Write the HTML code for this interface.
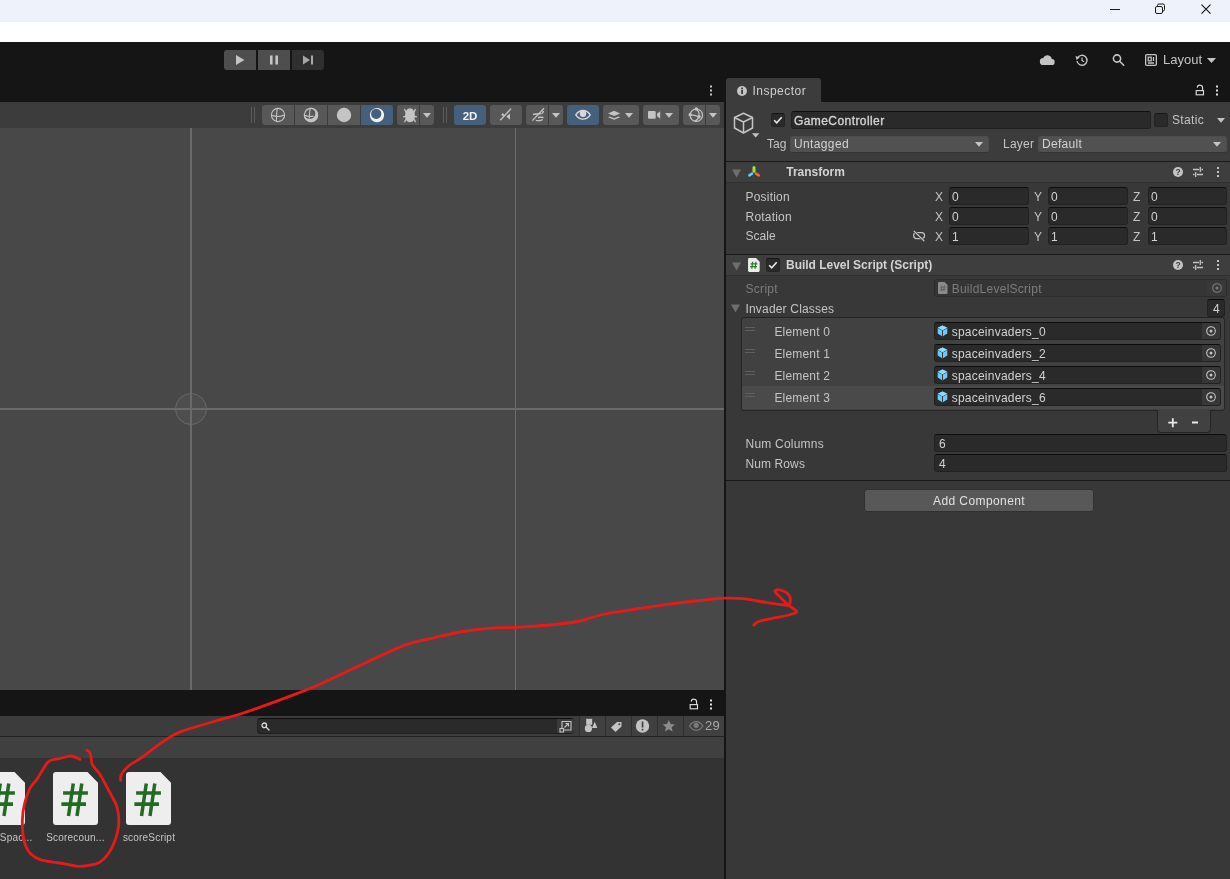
<!DOCTYPE html>
<html><head><meta charset="utf-8">
<style>
*{box-sizing:border-box;margin:0;padding:0}
html,body{width:1230px;height:879px;overflow:hidden;background:#151515;font-family:"Liberation Sans",sans-serif;font-size:12px;color:#c4c4c4}
.a{position:absolute}
.t{position:absolute;white-space:nowrap;line-height:14px;height:14px}
.f{position:absolute;background:#2a2a2a;border:1px solid #212121;border-top-color:#0d0d0d;border-radius:3px;height:18px}
.f span{position:absolute;left:2px;top:1px;line-height:14px;color:#d2d2d2;white-space:nowrap}
.btn{position:absolute;background:#585858;height:20px;top:105px}
.hl{position:absolute;left:726px;width:504px;height:1px;background:#1a1a1a}
.hd{position:absolute;left:726px;width:504px;height:21px;background:#3e3e3e;border-bottom:1px solid #303030}
.b{font-weight:bold;color:#d2d2d2}
svg{position:absolute;overflow:visible}
</style></head><body><div id="root" style="position:absolute;left:0;top:0;width:1230px;height:879px;will-change:transform">
<!-- window chrome -->
<div class="a" style="left:0;top:0;width:1230px;height:22px;background:#eef2fa"></div>
<div class="a" style="left:0;top:22px;width:1230px;height:20px;background:#fff"></div>
<svg style="left:1100px;top:0" width="130" height="21" viewBox="0 0 130 21" fill="none" stroke="#1a1a1a" stroke-width="1">
<path d="M10 9.5h10"/><rect x="55.5" y="6.500" width="7" height="7" rx="1.5"/><path d="M57.500 6.500v-1a1.500 1.500 0 0 1 1.500-1.500h4a1.500 1.500 0 0 1 1.500 1.500v4a1.500 1.500 0 0 1-1.500 1.500h-.5" />
<path d="M101.500 4.700l9 9M110.500 4.700l-9 9" stroke-width="1.200"/></svg>

<!-- main toolbar -->
<div class="a" style="left:0;top:42px;width:1230px;height:60px;background:#151515"></div>
<div class="a" style="left:224px;top:50px;width:32px;height:20px;background:#4e4e4e;border-radius:3px 0 0 3px"></div>
<div class="a" style="left:258px;top:50px;width:32px;height:20px;background:#4e4e4e"></div>
<div class="a" style="left:292px;top:50px;width:32px;height:20px;background:#2f2f2f;border-radius:0 3px 3px 0"></div>
<svg style="left:224px;top:50px" width="100" height="20" viewBox="0 0 100 20" fill="#c4c4c4">
<path d="M12 4.900l8.500 5.100l-8.500 5.100z"/><rect x="46" y="5.500" width="2.600" height="9"/><rect x="51.400" y="5.500" width="2.600" height="9"/>
<path d="M79 5.500l7 4.500l-7 4.500z" fill="#a8a8a8"/><rect x="87" y="5.500" width="2" height="9" fill="#a8a8a8"/></svg>

<!-- top-right icons -->
<svg style="left:1036px;top:50px" width="190" height="20" viewBox="0 0 190 20" fill="#c4c4c4">
<path d="M7.500 15a3.500 3.500 0 0 1-.3-7 4.500 4.500 0 0 1 8.600 1 3 3 0 0 1-.3 6z"/>
<g fill="none" stroke="#c4c4c4" stroke-width="1.400"><path d="M41.500 8a5 5 0 1 1-.5 3"/><path d="M46 7.500v3l2 1.300" stroke-width="1.200"/></g><path d="M39.500 6l1 4 3.300-2.600z"/>
<g fill="none" stroke="#c4c4c4" stroke-width="1.600"><circle cx="81" cy="8.500" r="3.600"/><path d="M83.700 11.200l4 4" stroke-linecap="round"/></g>
<g fill="none" stroke="#c4c4c4" stroke-width="1.300"><rect x="109.650" y="4.650" width="10.700" height="10.700" rx="1"/><rect x="112.200" y="7.200" width="3" height="3.600"/><path d="M117.500 7v4M112 13h6"/></g>
<path d="M171 8h9l-4.500 5z"/></svg>
<div class="t" style="left:1163px;top:53px;font-size:13px;color:#c4c4c4">Layout</div>

<!-- scene tab strip kebab -->
<svg style="left:709px;top:84px" width="4" height="14" viewBox="0 0 4 14" fill="#c4c4c4"><rect x="1" y="1.500" width="2" height="2"/><rect x="1" y="5.500" width="2" height="2"/><rect x="1" y="9.500" width="2" height="2"/></svg>

<!-- scene toolbar -->
<div class="a" style="left:0;top:102px;width:724px;height:26px;background:#3c3c3c"></div>
<div class="a" style="left:251px;top:107px;width:1px;height:16px;background:#5c5c5c"></div><div class="a" style="left:254px;top:107px;width:1px;height:16px;background:#5c5c5c"></div>
<div class="a" style="left:443px;top:107px;width:1px;height:16px;background:#5c5c5c"></div><div class="a" style="left:446px;top:107px;width:1px;height:16px;background:#5c5c5c"></div>
<div class="btn" style="left:262px;width:32px;border-radius:3px 0 0 3px"></div>
<div class="btn" style="left:295px;width:32px"></div>
<div class="btn" style="left:328px;width:32px"></div>
<div class="btn" style="left:361px;width:32px;background:#46607c;border-radius:0 3px 3px 0"></div>
<div class="btn" style="left:397px;width:22px;border-radius:3px 0 0 3px"></div>
<div class="btn" style="left:420px;width:14px;border-radius:0 3px 3px 0"></div>
<div class="btn" style="left:454px;width:32px;background:#46607c;border-radius:3px"></div>
<div class="btn" style="left:490px;width:32px;border-radius:3px"></div>
<div class="btn" style="left:526px;width:22px;border-radius:3px 0 0 3px"></div>
<div class="btn" style="left:549px;width:14px;border-radius:0 3px 3px 0"></div>
<div class="btn" style="left:567px;width:32px;background:#46607c;border-radius:3px"></div>
<div class="btn" style="left:603px;width:36px;border-radius:3px"></div>
<div class="btn" style="left:643px;width:36px;border-radius:3px"></div>
<div class="btn" style="left:683px;width:22px;border-radius:3px 0 0 3px"></div>
<div class="btn" style="left:706px;width:14px;border-radius:0 3px 3px 0"></div>
<svg style="left:0;top:102px" width="724" height="26" viewBox="0 102 724 26" fill="#c4c4c4">
<!-- shading mode icons -->
<g fill="none" stroke="#c4c4c4" stroke-width="1.100"><circle cx="278" cy="115" r="6.600"/><path d="M277.200 108.500c-.6 4-.8 9-.8 13M271.500 115.300c4 1.500 9 1.500 13 -.3"/>
<circle cx="311" cy="115" r="6.600"/><path d="M310.200 108.500c-.6 3-.8 7-.8 10M304.500 115.300c3 1.200 6 1.400 9 .8"/></g>
<path fill-rule="evenodd" d="M311 107.800a7.200 7.200 0 1 0 .01 0zM309.800 107.900a5.500 5.500 0 1 0 .01 0z" />
<circle cx="344" cy="115" r="7.200"/>
<path fill-rule="evenodd" fill="#f0f0f0" d="M377 108a7.100 7.100 0 1 0 .01 0zM376.200 108.800a5.100 5.100 0 1 0 .01 0z"/>
<!-- bug -->
<path d="M410 108.200c-2.800 0-4.900 2.800-4.900 7.800c0 4 2 6.200 4.900 6.200s4.900-2.200 4.900-6.200c0-5-2.100-7.800-4.900-7.800z"/>
<g stroke="#c4c4c4" stroke-width="1.300" fill="none" stroke-linecap="round"><path d="M406 112.200l-1.300-2.800M414 112.200l1.300-2.800M405.300 116.300l-1.700.6M414.700 116.300l1.700.6M405.700 119.800l-1 1.800M414.300 119.800l1 1.800"/></g>
<path d="M423 113h8l-4 4.700z"/>
<!-- 2D -->
<text x="470" y="119.500" text-anchor="middle" font-family="Liberation Sans" font-weight="bold" font-size="11.500" fill="#f0f0f0">2D</text>
<!-- audio off -->
<path d="M506.300 116.600l3.700-3v6.200z"/><path d="M502.300 113l2.200 1.800-1.300 1.500-1.800-1.200z"/><path d="M500.300 120.200l10.800-11.600" stroke="#c4c4c4" stroke-width="1.300" fill="none"/>
<!-- fx off -->
<g stroke="#c4c4c4" stroke-width="1.300" fill="none"><path d="M532.400 120.600l11.600-12.400"/><path d="M533 114.500c3-.8 5.500-1 8.500-.8M538 117.500c2-.4 3.500-.4 5.500 0M543.500 111l-1.200 2.500" stroke-width="1.500"/></g>
<path d="M535.500 119.500c2 .8 4.500 .8 7.500-.5l-.5 1.500c-2.500 1-5 1-6.500 .5z"/>
<path d="M552 113h8l-4 4.700z"/>
<!-- eye -->
<path d="M575.800 114.800c2-3 4.500-4.300 7.200-4.300s5.200 1.300 7.200 4.300c-2 3-4.500 4.300-7.200 4.300s-5.200-1.300-7.200-4.300z" fill="none" stroke="#d8d8d8" stroke-width="1.400"/><circle cx="583" cy="113.700" r="3.200" fill="#d8d8d8"/>
<!-- layers -->
<path d="M608 113.400l6.100-2.600 6.100 2.600-6.100 2.600z"/><path d="M608 117.200l1.800-.8 4.300 1.800 4.300-1.800 1.800 .8-6.100 2.600z"/>
<path d="M625 113h8l-4 4.700z"/>
<!-- camera -->
<rect x="648" y="111" width="7.700" height="7.800" rx="1"/><path d="M657 113.800l3.200-2.600v7.500l-3.200-2.600z"/>
<path d="M665 113h8l-4 4.700z"/>
<!-- gizmo sphere -->
<g fill="none" stroke="#c4c4c4" stroke-width="1.200"><circle cx="696.300" cy="115.200" r="6.200"/><path d="M696.300 109c2.500 2 3.200 5 2.700 7.700c-1 2.500-2.500 4-4.500 4.500M690 114.700c3 .3 6 1 9 2"/></g><circle cx="696.300" cy="109" r="1.700"/><circle cx="690.200" cy="114.700" r="1.700"/><circle cx="699" cy="116.700" r="1.700"/>
<path d="M709 113h8l-4 4.700z"/>
</svg>


<!-- scene view -->
<div class="a" style="left:0;top:128px;width:724px;height:562px;background:#484848"></div>
<div class="a" style="left:175px;top:393px;width:32px;height:32px;border-radius:50%;border:1px solid #686868;background:#4e4e4e"></div>
<div class="a" style="left:190px;top:128px;width:2px;height:562px;background:#6a6a6a"></div>
<div class="a" style="left:515px;top:128px;width:1px;height:562px;background:#6c6c6c"></div>
<div class="a" style="left:0;top:408px;width:724px;height:2px;background:#6a6a6a"></div>

<!-- project panel -->
<div class="a" style="left:0;top:690px;width:724px;height:26px;background:#151515"></div>
<div class="a" style="left:0;top:716px;width:724px;height:21px;background:#3c3c3c;border-bottom:1px solid #232323"></div>
<div class="a" style="left:0;top:737px;width:724px;height:21px;background:#404040"></div>
<div class="a" style="left:0;top:758px;width:724px;height:121px;background:#333"></div>
<!--PROJ-->
<svg style="left:688px;top:698px" width="30" height="14" viewBox="0 0 30 14" fill="none" stroke="#e0e0e0" stroke-width="1.100"><rect x="2.200" y="6.600" width="7.300" height="4.200"/><path d="M3.200 3.600a2.600 2.600 0 0 1 5.400 .6V6.500"/><g fill="#e0e0e0" stroke="none"><rect x="22" y="1.500" width="2" height="2"/><rect x="22" y="5.500" width="2" height="2"/><rect x="22" y="9.500" width="2" height="2"/></g></svg>
<div class="a" style="left:257px;top:718px;width:317px;height:16px;background:#2a2a2a;border:1px solid #212121;border-top-color:#0d0d0d;border-radius:4px"></div>
<div class="a" style="left:557px;top:719px;width:17px;height:14px;background:#3a3a3a;border-radius:0 3px 3px 0"></div>
<svg style="left:261px;top:722px" width="9" height="9" viewBox="0 0 9 9" fill="none" stroke="#d8d8d8" stroke-width="1.300"><circle cx="3.300" cy="3.300" r="2.300"/><path d="M5 5l3 3" stroke-linecap="round"/></svg>
<svg style="left:559px;top:720px" width="14" height="13" viewBox="0 0 14 13" fill="none" stroke="#c4c4c4" stroke-width="1.100"><path d="M3 8.500V1.500h9v8.500H5"/><rect x="1" y="8.500" width="3.500" height="3.500"/><path d="M5.500 7.500l4-4M6.500 3.500h3v3"/></svg>
<div class="a" style="left:579px;top:716px;width:26px;height:20px;background:#404040;border-left:1px solid #2f2f2f"></div>
<div class="a" style="left:605px;top:716px;width:26px;height:20px;background:#404040;border-left:1px solid #2f2f2f"></div>
<div class="a" style="left:631px;top:716px;width:26px;height:20px;background:#404040;border-left:1px solid #2f2f2f"></div>
<div class="a" style="left:657px;top:716px;width:26px;height:20px;background:#404040;border-left:1px solid #2f2f2f"></div>
<div class="a" style="left:683px;top:716px;width:41px;height:20px;background:#404040;border-left:1px solid #2f2f2f"></div>
<svg style="left:579px;top:716px" width="145" height="20" viewBox="579 716 145 20" fill="#c4c4c4"><rect x="586.200" y="718.800" width="6" height="6"/><circle cx="588.400" cy="728.400" r="3.600"/><path d="M592 728l2.700-6.200 2.700 6.200z"/><path d="M611 727.500l6-5.500h4.500v4.500l-6 5.500z"/><circle cx="619.300" cy="724.200" r="1" fill="#404040"/><circle cx="642.500" cy="726" r="6.700"/><rect x="641.700" y="721.500" width="1.700" height="6" fill="#404040"/><rect x="641.700" y="728.800" width="1.700" height="1.700" fill="#404040"/><path d="M668.800 720l1.800 4 4.300 .4-3.300 2.900 1 4.200-3.800-2.300-3.800 2.300 1-4.200-3.300-2.900 4.300-.4z" fill="#8c8c8c"/><path d="M689.500 726c2-3 4.300-4.300 6.700-4.300s4.700 1.300 6.700 4.300c-2 3-4.300 4.300-6.700 4.300s-4.700-1.300-6.700-4.300z" fill="none" stroke="#7a7a7a" stroke-width="1.200"/><circle cx="696.200" cy="725.300" r="2.600" fill="#7a7a7a"/></svg>
<div class="t" style="left:705px;top:719px;font-size:13px;color:#a8a8a8;letter-spacing:0.2px">29</div>
<svg style="left:-20px;top:772px" width="45" height="53" viewBox="0 0 45 53"><path d="M3 0h31.500l10.500 10.800v39.200a3 3 0 0 1-3 3h-39a3 3 0 0 1-3-3v-47a3 3 0 0 1 3-3z" fill="#eeeeee"/><g stroke="#236b23" fill="none"><path d="M20.300 11.500l-4.800 32.500M28.800 11.500l-4.800 32.500" stroke-width="3.500"/><path d="M10.100 21h24.800M8.400 32.200h24.600" stroke-width="3.700"/></g></svg>
<svg style="left:53px;top:772px" width="45" height="53" viewBox="0 0 45 53"><path d="M3 0h31.500l10.500 10.800v39.200a3 3 0 0 1-3 3h-39a3 3 0 0 1-3-3v-47a3 3 0 0 1 3-3z" fill="#eeeeee"/><g stroke="#236b23" fill="none"><path d="M20.300 11.500l-4.800 32.500M28.800 11.500l-4.800 32.500" stroke-width="3.500"/><path d="M10.100 21h24.800M8.400 32.200h24.600" stroke-width="3.700"/></g></svg>
<svg style="left:126px;top:772px" width="45" height="53" viewBox="0 0 45 53"><path d="M3 0h31.500l10.500 10.800v39.200a3 3 0 0 1-3 3h-39a3 3 0 0 1-3-3v-47a3 3 0 0 1 3-3z" fill="#eeeeee"/><g stroke="#236b23" fill="none"><path d="M20.300 11.500l-4.800 32.500M28.800 11.500l-4.800 32.500" stroke-width="3.500"/><path d="M10.100 21h24.800M8.400 32.200h24.600" stroke-width="3.700"/></g></svg>
<div class="t" style="left:-7px;top:831px;font-size:10px;line-height:13px;height:13px;color:#c4c4c4;letter-spacing:0.2px">VSpac...</div>
<div class="t" style="left:25.5px;width:100px;text-align:center;top:831px;font-size:10px;line-height:13px;height:13px;color:#c4c4c4;letter-spacing:0.2px">Scorecoun...</div>
<div class="t" style="left:99px;width:100px;text-align:center;top:831px;font-size:10px;line-height:13px;height:13px;color:#c4c4c4;letter-spacing:0.2px">scoreScript</div>
<!--/PROJ-->

<!-- inspector -->
<div class="a" style="left:726px;top:78px;width:95px;height:24px;background:#3c3c3c;border-radius:3px 3px 0 0"></div>
<div class="a" style="left:726px;top:102px;width:504px;height:777px;background:#383838"></div>
<div class="a" style="left:726px;top:102px;width:504px;height:59px;background:#3c3c3c"></div>
<!--INSP-->
<svg style="left:736px;top:85px" width="12" height="12" viewBox="0 0 12 12"><circle cx="6" cy="6" r="5" fill="#c4c4c4"/><rect x="5.200" y="5" width="1.800" height="4" fill="#3c3c3c"/><rect x="5.200" y="2.600" width="1.800" height="1.700" fill="#3c3c3c"/></svg>
<div class="t " style="left:752.4px;top:84px;letter-spacing:0.5px;color:#cfcfcf">Inspector</div>
<svg style="left:1194px;top:84px" width="30" height="14" viewBox="0 0 30 14" fill="none" stroke="#e0e0e0" stroke-width="1.100"><rect x="2.200" y="6.600" width="7.300" height="4.200"/><path d="M3.200 3.600a2.600 2.600 0 0 1 5.400 .6V6.500"/><g fill="#e0e0e0" stroke="none"><rect x="22" y="1.500" width="2" height="2"/><rect x="22" y="5.500" width="2" height="2"/><rect x="22" y="9.500" width="2" height="2"/></g></svg>
<svg style="left:732px;top:111px" width="30" height="28" viewBox="0 0 30 28" fill="none" stroke="#c4c4c4" stroke-width="1.500" stroke-linejoin="round"><path d="M11.500 2.300l9 4.200v10.500l-9 5-9-5V6.500z"/><path d="M2.500 6.500l9 4.500 9-4.500M11.500 11v11"/><path d="M20 22.300h7.400l-3.700 4.200z" fill="#c4c4c4" stroke="none"/></svg>
<div class="a" style="left:771px;top:113px;width:14px;height:14px;background:#2a2a2a;border:1px solid #242424;border-top-color:#161616;border-radius:2.500px"></div>
<svg style="left:771px;top:113px" width="14" height="14" viewBox="0 0 14 14" fill="none" stroke="#e8e8e8" stroke-width="1.600"><path d="M3.200 7.300l2.500 2.500 5-5.500"/></svg>
<div class="f" style="left:791px;top:111px;width:360px;height:18px;-webkit-text-stroke:0.35px #d2d2d2"><span style="letter-spacing:0.42px;top:2px;left:2px">GameController</span></div>
<div class="a" style="left:1154px;top:113px;width:14px;height:14px;background:#2a2a2a;border:1px solid #242424;border-top-color:#161616;border-radius:2.500px"></div>
<div class="t " style="left:1172px;top:113px;letter-spacing:0.33px;">Static</div>
<svg style="left:1216px;top:117px" width="10" height="7" viewBox="0 0 10 7"><path d="M1 1h8l-4 4.700z" fill="#c4c4c4"/></svg>
<div class="t " style="left:767px;top:137px;letter-spacing:0px;">Tag</div>
<div class="a" style="left:790px;top:136px;width:199px;height:17px;background:#515151;border:1px solid #4d4d4d;border-bottom-color:#333;border-radius:3px"></div>
<div class="t " style="left:794px;top:137px;letter-spacing:0.37px;color:#d2d2d2">Untagged</div>
<svg style="left:974px;top:141px" width="10" height="7" viewBox="0 0 10 7"><path d="M1 1h8l-4 4.700z" fill="#c4c4c4"/></svg>
<div class="t " style="left:1003px;top:137px;letter-spacing:0.25px;">Layer</div>
<div class="a" style="left:1038px;top:136px;width:189px;height:17px;background:#515151;border:1px solid #4d4d4d;border-bottom-color:#333;border-radius:3px"></div>
<div class="t " style="left:1042px;top:137px;letter-spacing:0.3px;color:#d2d2d2">Default</div>
<svg style="left:1212px;top:141px" width="10" height="7" viewBox="0 0 10 7"><path d="M1 1h8l-4 4.700z" fill="#c4c4c4"/></svg>
<div class="hl" style="top:161px"></div>
<div class="hd" style="top:162px"></div>
<svg style="left:731px;top:168.5px" width="11" height="9" viewBox="0 0 11 9"><path d="M1 .5h9l-4.500 8z" fill="#6e6e6e"/></svg>
<svg style="left:1172px;top:166px" width="54" height="12" viewBox="0 0 54 12"><circle cx="6" cy="6" r="5" fill="#c4c4c4"/><text x="6" y="9.200" font-size="8.500" font-weight="bold" text-anchor="middle" fill="#3e3e3e" font-family="Liberation Sans">?</text><g stroke="#c4c4c4" stroke-width="1.300" fill="none"><path d="M21 3.500h6M29.500 3.500h1.500M21 8.500h1.500M25 8.500h6M28.300 1v5M23.700 6v5"/></g><g fill="#c4c4c4"><rect x="45" y="1" width="2" height="2"/><rect x="45" y="5" width="2" height="2"/><rect x="45" y="9" width="2" height="2"/></g></svg>
<svg style="left:747px;top:165px" width="14" height="14" viewBox="0 0 14 14" fill="none" stroke-linecap="round"><path d="M7 2.600v3.600" stroke="#a4e03c" stroke-width="3"/><path d="M5 8.700l-2.600 1.600" stroke="#62ccff" stroke-width="2.600"/><path d="M9.100 8.700l2.600 1.600" stroke="#f86a3c" stroke-width="2.600"/></svg>
<div class="t b" style="left:786.3px;top:165px;letter-spacing:-0.02px;">Transform</div>
<div class="t " style="left:745.5px;top:190px;letter-spacing:0.2px;">Position</div>
<div class="t " style="left:935px;top:190px;letter-spacing:0px;">X</div>
<div class="f" style="left:949px;top:187px;width:80px;height:18px;"><span style="letter-spacing:0.2px;top:2px;left:2px">0</span></div>
<div class="t " style="left:1034px;top:190px;letter-spacing:0px;">Y</div>
<div class="f" style="left:1048px;top:187px;width:80px;height:18px;"><span style="letter-spacing:0.2px;top:2px;left:2px">0</span></div>
<div class="t " style="left:1133px;top:190px;letter-spacing:0px;">Z</div>
<div class="f" style="left:1148px;top:187px;width:79px;height:18px;"><span style="letter-spacing:0.2px;top:2px;left:2px">0</span></div>
<div class="t " style="left:745.5px;top:210px;letter-spacing:0.21px;">Rotation</div>
<div class="t " style="left:935px;top:210px;letter-spacing:0px;">X</div>
<div class="f" style="left:949px;top:207px;width:80px;height:18px;"><span style="letter-spacing:0.2px;top:2px;left:2px">0</span></div>
<div class="t " style="left:1034px;top:210px;letter-spacing:0px;">Y</div>
<div class="f" style="left:1048px;top:207px;width:80px;height:18px;"><span style="letter-spacing:0.2px;top:2px;left:2px">0</span></div>
<div class="t " style="left:1133px;top:210px;letter-spacing:0px;">Z</div>
<div class="f" style="left:1148px;top:207px;width:79px;height:18px;"><span style="letter-spacing:0.2px;top:2px;left:2px">0</span></div>
<div class="t " style="left:745.5px;top:229px;letter-spacing:0.05px;">Scale</div>
<div class="t " style="left:935px;top:230px;letter-spacing:0px;">X</div>
<div class="f" style="left:949px;top:227px;width:80px;height:18px;"><span style="letter-spacing:0.2px;top:2px;left:2px">1</span></div>
<div class="t " style="left:1034px;top:230px;letter-spacing:0px;">Y</div>
<div class="f" style="left:1048px;top:227px;width:80px;height:18px;"><span style="letter-spacing:0.2px;top:2px;left:2px">1</span></div>
<div class="t " style="left:1133px;top:230px;letter-spacing:0px;">Z</div>
<div class="f" style="left:1148px;top:227px;width:79px;height:18px;"><span style="letter-spacing:0.2px;top:2px;left:2px">1</span></div>
<svg style="left:905px;top:224px" width="30" height="24" viewBox="905 224 30 24" fill="none" stroke="#c4c4c4" stroke-width="1.200" stroke-linecap="round"><rect x="913.600" y="232.600" width="11" height="6" rx="3"/><path d="M914.200 231.200l9.700 9.600" stroke="#383838" stroke-width="2.400"/><path d="M914.200 231.200l9.700 9.600"/></svg>
<div class="hl" style="top:254px"></div>
<div class="hd" style="top:255px"></div>
<svg style="left:731px;top:261.5px" width="11" height="9" viewBox="0 0 11 9"><path d="M1 .5h9l-4.500 8z" fill="#6e6e6e"/></svg>
<svg style="left:1172px;top:259px" width="54" height="12" viewBox="0 0 54 12"><circle cx="6" cy="6" r="5" fill="#c4c4c4"/><text x="6" y="9.200" font-size="8.500" font-weight="bold" text-anchor="middle" fill="#3e3e3e" font-family="Liberation Sans">?</text><g stroke="#c4c4c4" stroke-width="1.300" fill="none"><path d="M21 3.500h6M29.500 3.500h1.500M21 8.500h1.500M25 8.500h6M28.300 1v5M23.700 6v5"/></g><g fill="#c4c4c4"><rect x="45" y="1" width="2" height="2"/><rect x="45" y="5" width="2" height="2"/><rect x="45" y="9" width="2" height="2"/></g></svg>
<svg style="left:748px;top:258px" width="12.200" height="14" viewBox="0 0 13 15"><path d="M1.500 0h7l4 4v9.500a1.500 1.500 0 0 1-1.500 1.500h-9.500a1.500 1.500 0 0 1-1.500-1.500v-12a1.500 1.500 0 0 1 1.500-1.500z" fill="#ececec"/><g stroke="#2a7a2a" stroke-width="1.300" fill="none"><path d="M5 4l-1 7.500M8.500 4l-1 7.500M2.700 6.300h7.300M2.300 9.300h7.300"/></g></svg>
<div class="a" style="left:766px;top:258px;width:14px;height:14px;background:#2a2a2a;border:1px solid #242424;border-top-color:#161616;border-radius:2.500px"></div>
<svg style="left:766px;top:258px" width="14" height="14" viewBox="0 0 14 14" fill="none" stroke="#e8e8e8" stroke-width="1.600"><path d="M3.200 7.300l2.500 2.500 5-5.500"/></svg>
<div class="t b" style="left:786px;top:258px;letter-spacing:-0.02px;">Build Level Script (Script)</div>
<div class="t " style="left:745.5px;top:282px;letter-spacing:0.3px;color:#7c7c7c">Script</div>
<div class="a" style="left:934px;top:279px;width:293px;height:18px;background:#353535;border:1px solid #2c2c2c;border-radius:3px"></div>
<div class="a" style="left:1207px;top:280px;width:19px;height:16px;background:#393939;border-radius:0 2px 2px 0"></div>
<svg style="left:938px;top:282px" width="10" height="12" viewBox="0 0 10 12"><path d="M1 0h5.500l3 3v8a1 1 0 0 1-1 1h-7.500a1 1 0 0 1-1-1v-10a1 1 0 0 1 1-1z" fill="#8a8a8a"/><g stroke="#4f6f4f" stroke-width="1" fill="none"><path d="M4 3.500l-.7 5.500M6.500 3.500l-.7 5.500M2.200 5.200h5.300M2 7.500h5.300"/></g></svg>
<div class="t " style="left:951.7px;top:282px;letter-spacing:0.25px;color:#7c7c7c">BuildLevelScript</div>
<svg style="left:1211px;top:282px" width="12" height="12" viewBox="0 0 12 12"><circle cx="6" cy="6" r="4.300" fill="none" stroke="#7c7c7c" stroke-width="1.100"/><circle cx="6" cy="6" r="1.500" fill="#7c7c7c"/></svg>
<svg style="left:730px;top:304px" width="11" height="9" viewBox="0 0 11 9"><path d="M1 .5h9l-4.500 8z" fill="#6e6e6e"/></svg>
<div class="t " style="left:745.5px;top:301.5px;letter-spacing:0.18px;">Invader Classes</div>
<div class="f" style="left:1207px;top:299px;width:18px;height:18px;"><span style="letter-spacing:0px;top:2px;left:2px"><i style="font-style:normal;margin-left:3px">4</i></span></div>
<div class="a" style="left:741px;top:317px;width:484px;height:94px;background:#414141;border:1px solid #242424;border-radius:3px"></div>
<div class="a" style="left:742px;top:386px;width:482px;height:23px;background:#4a4a4a"></div>
<div class="a" style="left:745px;top:327px;width:10px;height:1px;background:#5e5e5e"></div><div class="a" style="left:745px;top:330px;width:10px;height:1px;background:#5e5e5e"></div>
<div class="t " style="left:774.4px;top:325px;letter-spacing:0.19px;">Element 0</div>
<div class="f" style="left:934px;top:322px;width:287px;height:18px;"><span style="letter-spacing:0.2px;top:1px;left:2px"></span></div>
<div class="a" style="left:1202px;top:323px;width:18px;height:16px;background:#373737;border-radius:0 2px 2px 0"></div>
<svg style="left:937px;top:325px" width="11" height="12" viewBox="0 0 11 12"><path d="M5.500 .5l4.800 2.300v5.700l-4.800 3-4.800-3V2.800z" fill="#6ecbf5"/><path d="M.7 2.800l4.800 2.500 4.800-2.500M5.500 5.300v6.200" stroke="#2a2a2a" stroke-width=".9" fill="none"/><path d="M5.500 .5l4.800 2.300-4.800 2.500-4.800-2.500z" fill="#8fdcff"/></svg>
<div class="t " style="left:951.7px;top:325px;letter-spacing:0.23px;color:#d2d2d2">spaceinvaders_0</div>
<svg style="left:1205px;top:325px" width="12" height="12" viewBox="0 0 12 12"><circle cx="6" cy="6" r="4.300" fill="none" stroke="#c4c4c4" stroke-width="1.100"/><circle cx="6" cy="6" r="1.500" fill="#c4c4c4"/></svg>
<div class="a" style="left:745px;top:349px;width:10px;height:1px;background:#5e5e5e"></div><div class="a" style="left:745px;top:352px;width:10px;height:1px;background:#5e5e5e"></div>
<div class="t " style="left:774.4px;top:347px;letter-spacing:0.19px;">Element 1</div>
<div class="f" style="left:934px;top:344px;width:287px;height:18px;"><span style="letter-spacing:0.2px;top:1px;left:2px"></span></div>
<div class="a" style="left:1202px;top:345px;width:18px;height:16px;background:#373737;border-radius:0 2px 2px 0"></div>
<svg style="left:937px;top:347px" width="11" height="12" viewBox="0 0 11 12"><path d="M5.500 .5l4.800 2.300v5.700l-4.800 3-4.800-3V2.800z" fill="#6ecbf5"/><path d="M.7 2.800l4.800 2.500 4.800-2.500M5.500 5.300v6.200" stroke="#2a2a2a" stroke-width=".9" fill="none"/><path d="M5.500 .5l4.800 2.300-4.800 2.500-4.800-2.500z" fill="#8fdcff"/></svg>
<div class="t " style="left:951.7px;top:347px;letter-spacing:0.23px;color:#d2d2d2">spaceinvaders_2</div>
<svg style="left:1205px;top:347px" width="12" height="12" viewBox="0 0 12 12"><circle cx="6" cy="6" r="4.300" fill="none" stroke="#c4c4c4" stroke-width="1.100"/><circle cx="6" cy="6" r="1.500" fill="#c4c4c4"/></svg>
<div class="a" style="left:745px;top:371px;width:10px;height:1px;background:#5e5e5e"></div><div class="a" style="left:745px;top:374px;width:10px;height:1px;background:#5e5e5e"></div>
<div class="t " style="left:774.4px;top:369px;letter-spacing:0.19px;">Element 2</div>
<div class="f" style="left:934px;top:366px;width:287px;height:18px;"><span style="letter-spacing:0.2px;top:1px;left:2px"></span></div>
<div class="a" style="left:1202px;top:367px;width:18px;height:16px;background:#373737;border-radius:0 2px 2px 0"></div>
<svg style="left:937px;top:369px" width="11" height="12" viewBox="0 0 11 12"><path d="M5.500 .5l4.800 2.300v5.700l-4.800 3-4.800-3V2.800z" fill="#6ecbf5"/><path d="M.7 2.800l4.800 2.500 4.800-2.500M5.500 5.300v6.200" stroke="#2a2a2a" stroke-width=".9" fill="none"/><path d="M5.500 .5l4.800 2.300-4.800 2.500-4.800-2.500z" fill="#8fdcff"/></svg>
<div class="t " style="left:951.7px;top:369px;letter-spacing:0.23px;color:#d2d2d2">spaceinvaders_4</div>
<svg style="left:1205px;top:369px" width="12" height="12" viewBox="0 0 12 12"><circle cx="6" cy="6" r="4.300" fill="none" stroke="#c4c4c4" stroke-width="1.100"/><circle cx="6" cy="6" r="1.500" fill="#c4c4c4"/></svg>
<div class="a" style="left:745px;top:393px;width:10px;height:1px;background:#5e5e5e"></div><div class="a" style="left:745px;top:396px;width:10px;height:1px;background:#5e5e5e"></div>
<div class="t " style="left:774.4px;top:391px;letter-spacing:0.19px;">Element 3</div>
<div class="f" style="left:934px;top:388px;width:287px;height:18px;"><span style="letter-spacing:0.2px;top:1px;left:2px"></span></div>
<div class="a" style="left:1202px;top:389px;width:18px;height:16px;background:#373737;border-radius:0 2px 2px 0"></div>
<svg style="left:937px;top:391px" width="11" height="12" viewBox="0 0 11 12"><path d="M5.500 .5l4.800 2.300v5.700l-4.800 3-4.800-3V2.800z" fill="#6ecbf5"/><path d="M.7 2.800l4.800 2.500 4.800-2.500M5.500 5.300v6.200" stroke="#2a2a2a" stroke-width=".9" fill="none"/><path d="M5.500 .5l4.800 2.300-4.800 2.500-4.800-2.500z" fill="#8fdcff"/></svg>
<div class="t " style="left:951.7px;top:391px;letter-spacing:0.23px;color:#d2d2d2">spaceinvaders_6</div>
<svg style="left:1205px;top:391px" width="12" height="12" viewBox="0 0 12 12"><circle cx="6" cy="6" r="4.300" fill="none" stroke="#c4c4c4" stroke-width="1.100"/><circle cx="6" cy="6" r="1.500" fill="#c4c4c4"/></svg>
<div class="a" style="left:1157px;top:410px;width:54px;height:23px;background:#414141;border:1px solid #242424;border-top:none;border-radius:0 0 4px 4px"></div>
<svg style="left:1157px;top:410px" width="54" height="23" viewBox="0 0 54 23" stroke="#e8e8e8" stroke-width="1.800"><path d="M11.300 12.700h9M15.800 8.200v9M35 12.500h6"/></svg>
<div class="t " style="left:745.5px;top:437px;letter-spacing:0.22px;">Num Columns</div>
<div class="f" style="left:934px;top:434px;width:293px;height:18px;"><span style="letter-spacing:0.2px;top:2px;left:4px">6</span></div>
<div class="t " style="left:745.5px;top:457px;letter-spacing:0.1px;">Num Rows</div>
<div class="f" style="left:934px;top:454px;width:293px;height:18px;"><span style="letter-spacing:0.2px;top:2px;left:4px">4</span></div>
<div class="hl" style="top:480px"></div>
<div class="a" style="left:864px;top:489px;width:230px;height:23px;background:#585858;border:1px solid #303030;border-radius:3px"></div>
<div class="t " style="left:933px;top:494px;letter-spacing:0.41px;color:#e0e0e0">Add Component</div>
<!--/INSP-->

<!-- red annotation -->
<svg style="left:0;top:0" width="1230" height="879" viewBox="0 0 1230 879" fill="none" stroke="#e61a1a" stroke-width="2.800" stroke-linecap="round" stroke-linejoin="round">
<path d="M79.9 759.4C78.4 758.8 74.3 756.1 71.0 756.0C67.7 755.9 63.7 757.6 60.0 758.5C56.3 759.4 51.7 759.6 49.0 761.2C46.3 762.8 45.7 765.3 43.7 768.3C41.7 771.3 39.2 775.8 36.9 779.2C34.6 782.6 31.9 784.4 29.8 788.6C27.7 792.9 25.5 799.5 24.3 804.7C23.1 809.9 22.6 814.6 22.4 819.6C22.2 824.6 22.5 830.2 23.0 834.5C23.5 838.8 24.2 842.3 25.5 845.6C26.8 848.9 28.4 851.9 31.0 854.3C33.6 856.7 36.2 858.4 41.0 859.9C45.8 861.4 53.8 862.0 59.6 863.0C65.4 864.0 71.6 865.5 75.7 866.0C79.8 866.5 80.5 866.6 84.4 866.0C88.3 865.4 95.4 864.4 99.3 862.4C103.2 860.4 105.2 858.1 107.9 854.3C110.6 850.5 113.7 843.8 115.4 839.4C117.1 835.0 117.7 831.2 118.3 828.0C118.9 824.8 118.8 822.5 118.8 820.0C118.8 817.5 118.6 815.2 118.2 812.7C117.8 810.2 117.3 807.7 116.3 805.0C115.2 802.3 113.6 799.5 111.9 796.3C110.2 793.1 108.0 789.1 106.1 785.6C104.2 782.1 102.2 778.0 100.3 775.0C98.4 772.0 95.9 769.6 94.5 767.7C93.1 765.8 92.4 765.1 91.8 763.4C91.2 761.7 91.4 759.5 91.1 757.6C90.8 755.8 90.4 753.5 89.7 752.3C89.0 751.1 87.3 750.6 86.8 750.3"/>
<path d="M120.6 780.3C120.7 779.4 120.4 776.7 121.1 775.0C121.8 773.3 123.0 771.8 124.5 770.1C126.0 768.4 127.2 766.8 130.0 764.8C132.8 762.8 135.9 761.6 141.2 757.9C146.5 754.1 155.5 746.6 162.0 742.3C168.5 738.0 171.5 735.4 180.2 731.9C188.9 728.4 203.2 724.8 214.0 721.5C224.8 718.2 232.3 716.8 245.3 712.4C258.3 708.0 280.0 700.0 292.1 695.4C304.2 690.8 307.3 689.8 318.1 685.0C328.9 680.2 344.1 672.9 357.1 666.8C370.1 660.7 387.1 652.6 396.2 648.6C405.3 644.6 405.5 644.7 411.8 642.9C418.1 641.1 426.0 639.6 434.0 637.8C442.0 636.0 450.9 633.6 460.0 632.0C469.1 630.4 479.5 629.1 488.8 628.3C498.1 627.5 505.8 627.8 516.0 627.3C526.2 626.8 539.8 626.0 550.0 625.0C560.2 624.0 570.8 622.7 577.5 621.5C584.2 620.3 585.4 619.2 590.0 618.0C594.6 616.8 596.6 615.6 604.9 614.0C613.2 612.4 628.6 610.2 640.0 608.5C651.4 606.8 663.0 605.0 673.0 603.7C683.0 602.4 691.5 601.4 700.0 600.5C708.5 599.6 716.8 598.5 724.3 598.2C731.8 597.9 739.5 598.3 745.0 598.8C750.5 599.3 752.8 600.2 757.3 601.0C761.8 601.8 767.5 602.6 772.0 603.3C776.5 604.0 781.8 604.7 784.6 605.0C787.4 605.3 788.0 605.9 789.0 605.2C790.0 604.5 790.1 602.3 790.3 601.0C790.5 599.7 790.5 598.5 790.0 597.3C789.5 596.0 788.4 594.5 787.5 593.5C786.6 592.5 785.9 592.0 784.6 591.4C783.4 590.8 781.4 590.3 780.0 590.0C778.6 589.7 777.2 589.7 776.4 589.8C775.6 589.9 775.1 590.2 775.0 590.7C774.9 591.2 774.5 591.3 775.5 592.5C776.5 593.7 778.9 595.9 781.0 598.0C783.1 600.1 786.3 603.3 788.2 605.0C790.1 606.7 791.1 607.0 792.5 608.0C793.9 609.0 796.0 610.2 796.4 611.0C796.8 611.8 797.0 612.2 795.0 613.0C793.0 613.8 788.4 615.1 784.6 616.0C780.8 616.9 776.3 617.6 772.0 618.5C767.7 619.4 761.7 620.6 759.0 621.4C756.3 622.1 756.9 622.4 756.0 623.0C755.1 623.6 754.2 624.9 753.8 625.3"/>
</svg>
</div></body></html>
